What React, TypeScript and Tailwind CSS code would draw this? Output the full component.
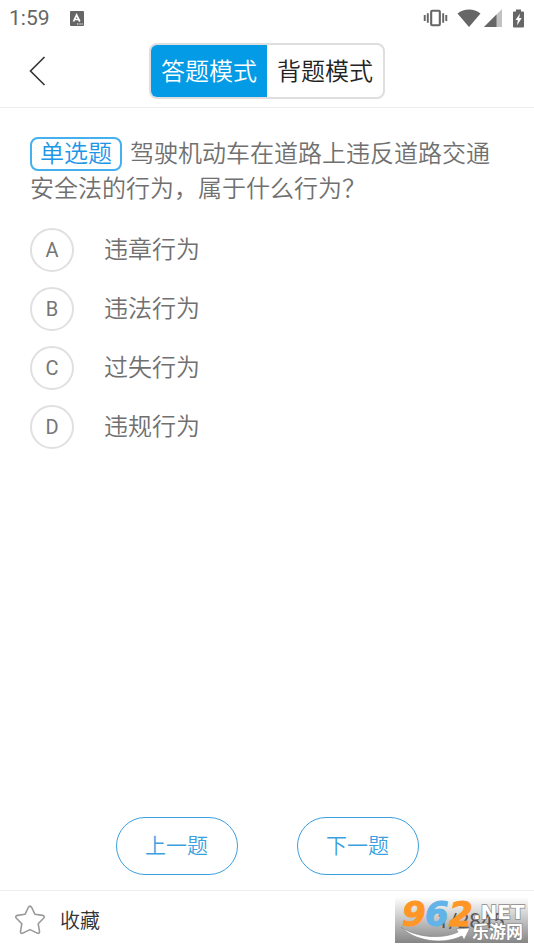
import { useState } from "react";

const options = [
    { key: "A", text: "违章行为" },
    { key: "B", text: "违法行为" },
    { key: "C", text: "过失行为" },
    { key: "D", text: "违规行为" },
];

const StatusBar = () => {
    return (
        <div className="flex h-9 items-center pl-[9px] pr-[10px] text-[#666]">
            <span className="pt-0.5 text-[21px]">1:59</span>
            <svg className="ml-5 h-[15px] w-[14px]" viewBox="0 0 14 15" aria-hidden="true">
                <rect width="14" height="15" rx="1" fill="#666" />
                <path d="M3.500 10.500 6.600 4 9.800 10.500M4.600 8.500h4" fill="none" stroke="#fff" strokeWidth="1.7" />
                <path d="M7 13h1.400M9.400 13h1.400M11.600 13h1.200" stroke="#fff" strokeWidth="1.2" />
            </svg>
            <svg className="ml-auto h-[18px] w-[25px]" viewBox="0 0 26 18" aria-hidden="true">
                <rect x="8.5" y="1.5" width="9" height="15" rx="1" fill="none" stroke="#666" strokeWidth="2.2" />
                <path d="M5 4v10M1.800 6v6M21 4v10M24.200 6v6" stroke="#666" strokeWidth="2" />
            </svg>
            <svg className="ml-[9px] h-[18px] w-6" viewBox="0 0 24 18" aria-hidden="true">
                <path d="M.5 4.500C7-1 17-1 23.500 4.500L12 18z" fill="#666" />
            </svg>
            <svg className="ml-[3px] h-[18px] w-[18px]" viewBox="0 0 18 18" aria-hidden="true">
                <path d="M18 0v18H0z" fill="#c2c2c2" />
                <path d="M12.500 5.500V18H0z" fill="#666" />
            </svg>
            <svg className="ml-[11px] h-[19px] w-[11px]" viewBox="0 0 11 18" aria-hidden="true">
                <path d="M3 0h5v2h2q1 0 1 1v14q0 1-1 1H1q-1 0-1-1V3q0-1 1-1h2z" fill="#666" />
                <path d="M7 4 2.500 10.500h2.300L4 16 8.700 8.500H6.200z" fill="#fff" />
            </svg>
        </div>
    );
};

const SiteLogo = () => {
    return (
        <svg className="h-[46px] w-[133px] overflow-visible" viewBox="0 0 133 46" role="img" aria-label="962.NET 乐游网">
            <defs>
                <linearGradient id="shade" x1="0" y1="0" x2="0" y2="1">
                    <stop offset="0" stopColor="#fff" />
                    <stop offset="0.5" stopColor="#c4c4c4" />
                    <stop offset="1" stopColor="#858585" />
                </linearGradient>
            </defs>
            <rect width="133" height="46" fill="url(#shade)" />
            <text x="42" y="31" fontSize="21" fill="#555" className="font-['Roboto',sans-serif]">1/2845</text>
            <path d="M6 30C20 40 46 43 63 35L61 32 75 31 69 43 67 39C46 49 18 43 6 30z" fill="#fff" stroke="#888" strokeWidth="0.7" />
            <g className="font-['DejaVu_Sans',sans-serif] font-bold italic" fontSize="34" strokeWidth="1" paintOrder="stroke">
                <text x="7" y="29" fill="#ff9626" stroke="#ff9626">9</text>
                <text x="30" y="29" fill="#62b3e8" stroke="#62b3e8">6</text>
                <text x="54" y="29" fill="#ff9626" stroke="#ff9626">2</text>
            </g>
            <g fill="#fff" stroke="#888" strokeWidth="1.4" paintOrder="stroke">
                <text x="78" y="22" fontSize="20" className="font-['DejaVu_Sans',sans-serif] font-bold">.NET</text>
                <text x="77" y="41" fontSize="17" className="font-['Noto_Sans_CJK_SC',sans-serif] font-bold">乐游网</text>
            </g>
        </svg>
    );
};

export default function App() {
    const [mode, setMode] = useState("answer");
    const [choice, setChoice] = useState("");

    const tab = "px-[10px] text-2xl font-[350]";
    const pill = "h-[58px] w-[122px] rounded-full border border-[#3b9fe0] pt-0.5 text-[21px] font-[350] text-[#3b9fe0]";

    return (
        <div className="flex min-h-screen flex-col bg-white font-['Roboto','Noto_Sans_CJK_SC',sans-serif]">
            <StatusBar />
            <header className="relative flex h-[72px] items-center justify-center border-b border-[#eee] pb-px">
                <button type="button" aria-label="返回" className="absolute left-7 p-0">
                    <svg className="h-8 w-5" viewBox="0 0 20 32" aria-hidden="true">
                        <path d="M16.500 2 2.500 16l14 14" fill="none" stroke="#333" strokeWidth="1.6" />
                    </svg>
                </button>
                <div className="flex h-14 overflow-hidden rounded-lg border-2 border-[#dedede]">
                    <button type="button" onClick={() => setMode("answer")} className={`${tab} pt-0.5 ${mode === "answer" ? "bg-[#039be5] text-white" : "text-[#222]"}`}>
                        答题模式
                    </button>
                    <button type="button" onClick={() => setMode("recite")} className={`${tab} pt-0.5 ${mode === "recite" ? "bg-[#039be5] text-white" : "text-[#222]"}`}>
                        背题模式
                    </button>
                </div>
            </header>

            <main className="flex-1 px-[30px] pt-[29px] text-2xl font-[350] text-[#707070]">
                <p className="leading-[35px]">
                    <span className="mr-2 inline-block rounded-lg border-2 border-[#45b0ee] px-2 leading-[30px] text-[#1e96e8]">单选题</span>
                    驾驶机动车在道路上违反道路交通安全法的行为，属于什么行为？
                </p>
                <ul className="mt-[21px] flex flex-col gap-[15px]">
                    {options.map((o) => (
                        <li key={o.key}>
                            <label className="flex items-center gap-[30px]">
                                <input type="radio" name="choice" className="peer sr-only" checked={choice === o.key} onChange={() => setChoice(o.key)} />
                                <span className="flex size-11 items-center justify-center rounded-full border-2 border-[#e0e0e0] text-xl font-normal text-[#757575] peer-checked:border-[#039be5]">
                                    {o.key}
                                </span>
                                {o.text}
                            </label>
                        </li>
                    ))}
                </ul>
            </main>

            <div className="flex justify-center gap-[59px] pb-[15px]">
                <button type="button" className={pill}>上一题</button>
                <button type="button" className={pill}>下一题</button>
            </div>

            <footer className="flex h-[59px] items-center justify-between border-t border-[#eee] pl-[14px] pr-1.5">
                <button type="button" className="flex items-center gap-[14px] text-xl text-[#333]">
                    <svg className="size-8" viewBox="0 0 32 32" aria-hidden="true">
                        <path d="M14.300 3.500q1.700-2.800 3.400 0l3.300 6.800 7.600 1.100q2.800.7 1 2.900l-5.400 5.500 1.300 7.600q.2 2.700-2.300 1.700L16 25.600l-7.200 3.500q-2.500 1-2.300-1.700l1.300-7.600-5.400-5.500q-1.800-2.200 1-2.900l7.600-1.100z" fill="none" stroke="#999" strokeWidth="1.600" strokeLinejoin="round" />
                    </svg>
                    <span className="pt-0.5 font-[350]">收藏</span>
                </button>
                <SiteLogo />
            </footer>
        </div>
    );
}
